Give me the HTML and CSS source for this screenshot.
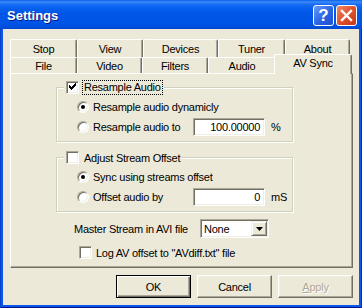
FILE: index.html
```html
<!DOCTYPE html>
<html lang="en">
<head>
  <meta charset="UTF-8" />
  <title>Settings</title>
  <link rel="stylesheet" href="styles.css">
</head>
<body>
  <div class="window">
    <div class="titlebar">
      <span class="title">Settings</span>
      <div class="caption-buttons">
        <span class="cap-btn help">?</span>
        <span class="cap-btn close">
          <svg width="19" height="19" viewBox="0 0 19 19">
            <path d="M5 5 L14 14 M14 5 L5 14" stroke="#fff" stroke-width="2.4" stroke-linecap="square" />
          </svg>
        </span>
      </div>
    </div>

    <div class="client">
      <!-- Tabs -->
      <div class="tab-row back">
        <div class="tab w-stop">Stop</div>
        <div class="tab w-view">View</div>
        <div class="tab w-devices">Devices</div>
        <div class="tab w-tuner">Tuner</div>
        <div class="tab w-about">About</div>
      </div>
      <div class="tab-row front">
        <div class="tab w-file">File</div>
        <div class="tab w-video">Video</div>
        <div class="tab w-filters">Filters</div>
        <div class="tab w-audio">Audio</div>
        <div class="tab active">AV Sync</div>
      </div>

      <div class="panel">
        <div class="group">
          <div class="group-head">
            <span class="checkbox checked"></span>
            <span class="focused">Resample Audio</span>
          </div>
          <div class="opt first">
            <span class="radio on"></span>
            <span>Resample audio dynamicly</span>
          </div>
          <div class="opt second">
            <span class="radio"></span>
            <span class="opt-label">Resample audio to</span>
            <span class="edit">100.00000</span>
            <span class="unit">%</span>
          </div>
        </div>

        <div class="group group-2">
          <div class="group-head">
            <span class="checkbox"></span>
            <span>Adjust Stream Offset</span>
          </div>
          <div class="opt first">
            <span class="radio on"></span>
            <span>Sync using streams offset</span>
          </div>
          <div class="opt second">
            <span class="radio"></span>
            <span class="opt-label">Offset audio by</span>
            <span class="edit">0</span>
            <span class="unit">mS</span>
          </div>
        </div>

        <div class="master-row">
          <span class="master-label">Master Stream in AVI file</span>
          <div class="combo">
            <span class="combo-text">None</span>
            <span class="combo-btn">
              <svg width="7" height="4" viewBox="0 0 7 4"><path d="M0 0 H7 L3.5 4 Z" fill="#000" /></svg>
            </span>
          </div>
        </div>

        <div class="log-row">
          <span class="checkbox"></span>
          <span>Log AV offset to "AVdiff.txt" file</span>
        </div>
      </div>

      <!-- Dialog buttons -->
      <div class="buttons">
        <button class="btn default">OK</button>
        <button class="btn">Cancel</button>
        <button class="btn disabled"><u>A</u>pply</button>
      </div>
    </div>
  </div>
</body>
</html>
```

FILE: styles.css
```css
body {
  margin: 0;
  font-family: "Liberation Sans", Arial, sans-serif;
  font-size: 11px;
  letter-spacing: -0.25px;
  color: #000;
}

.window {
  width: 362px;
  height: 308px;
  display: flex;
  flex-direction: column;
  background: #0b57ea;
  box-shadow: inset 1px 0 #0842c8, inset -1px 0 #0733a8, inset 0 -1px #00138c;
}

.titlebar {
  height: 29px;
  flex: none;
  display: flex;
  align-items: flex-start;
  padding: 0 5px 0 7px;
  background: linear-gradient(to bottom, #0a5fe8 0px, #3d8cfa 2px, #1a6ef5 4px, #0760ee 8px, #0055e5 14px, #0056e8 22px, #0051e0 26px, #0045d0 29px);
}

.title {
  flex: 1;
  margin-top: 8px;
  font-weight: bold;
  font-size: 13px;
  line-height: 15px;
  letter-spacing: 0;
  color: #fff;
  text-shadow: 1px 1px #0a1883;
}

.caption-buttons {
  display: flex;
  gap: 2px;
  margin-top: 5px;
}

.cap-btn {
  width: 21px;
  height: 21px;
  box-sizing: border-box;
  border: 1px solid #fff;
  border-radius: 3px;
  display: flex;
  align-items: center;
  justify-content: center;
  color: #fff;
}

.help {
  background: linear-gradient(135deg, #6a9cf8, #2a62e4 55%, #1b4fd0);
  font-weight: bold;
  font-size: 17px;
  letter-spacing: 0;
}

.close {
  background: linear-gradient(135deg, #f08a66, #e0502c 50%, #c2381a);
}

.client {
  flex: 1;
  margin: 0 3px 3px;
  background: #ece9d8;
  padding: 10px 6px 0 7px;
  display: flex;
  flex-direction: column;
}

/* Tabs */
.tab-row {
  display: flex;
}

.tab {
  box-sizing: border-box;
  height: 18px;
  border-top: 1px solid #fff;
  border-left: 1px solid #fff;
  border-right: 1px solid #716f64;
  border-radius: 2px 2px 0 0;
  box-shadow: inset -1px 0 #aca899;
  display: flex;
  align-items: center;
  justify-content: center;
  background: #ece9d8;
}

.front {
  height: 16px;
}

.front .tab {
  height: 16px;
}

.front .tab.active {
  width: 78px;
  height: 20px;
  margin: -3px 0 -1px -2px;
  padding-bottom: 3px;
  z-index: 1;
}

.w-stop { width: 67px; }
.w-view { width: 66px; }
.w-devices { width: 75px; }
.w-tuner { width: 67px; }
.w-about { width: 65px; }
.w-file { width: 67px; }
.w-video { width: 65px; }
.w-filters { width: 66px; }
.w-audio { width: 68px; }

.panel {
  height: 195px;
  box-sizing: border-box;
  border: 1px solid;
  border-color: #fff #716f64 #716f64 #fff;
  box-shadow: inset -1px -1px #aca899;
  padding: 13px 0 0 45px;
}

/* Group boxes */
.group {
  width: 237px;
  box-sizing: border-box;
  border: 1px solid #d0d0bf;
  box-shadow: 1px 1px 0 #fff, inset 1px 1px 0 #fff;
  padding-bottom: 5px;
}

.group-2 {
  margin-top: 15px;
}

.group-head {
  display: flex;
  align-items: center;
  gap: 5px;
  width: fit-content;
  height: 13px;
  margin: -7px 0 0 7px;
  padding: 0 2px;
  background: #ece9d8;
}

.focused {
  outline: 1px dotted #000;
  padding: 0 1px;
  margin-left: -1px;
  line-height: 13px;
}

.opt {
  display: flex;
  align-items: center;
  margin-left: 20px;
}

.opt.first {
  height: 16px;
  margin-top: 5px;
}

.opt.second {
  height: 18px;
  margin-top: 3px;
}

.opt .radio {
  margin-right: 4px;
}

.opt-label {
  width: 100px;
}

.unit {
  margin-left: 6px;
}

/* Controls */
.checkbox {
  width: 13px;
  height: 13px;
  flex: none;
  box-sizing: border-box;
  background: #fff;
  border: 1px solid;
  border-color: #aca899 #fff #fff #aca899;
  box-shadow: inset 1px 1px #716f64, inset -1px -1px #f1efe2;
}

.checkbox.checked {
  background: #fff linear-gradient(#000, #000) no-repeat;
  background:
    linear-gradient(#000, #000) 2px 3px / 1px 3px no-repeat,
    linear-gradient(#000, #000) 3px 4px / 1px 3px no-repeat,
    linear-gradient(#000, #000) 4px 5px / 1px 3px no-repeat,
    linear-gradient(#000, #000) 5px 4px / 1px 3px no-repeat,
    linear-gradient(#000, #000) 6px 3px / 1px 3px no-repeat,
    linear-gradient(#000, #000) 7px 2px / 1px 3px no-repeat,
    linear-gradient(#000, #000) 8px 1px / 1px 3px no-repeat,
    #fff;
}

.radio {
  width: 12px;
  height: 12px;
  flex: none;
  box-sizing: border-box;
  border-radius: 50%;
  background: #fff;
  border: 1px solid;
  border-color: #aca899 #fff #fff #aca899;
  box-shadow: inset 1px 1px #716f64, inset -1px -1px #f1efe2;
  display: flex;
  align-items: center;
  justify-content: center;
}

.radio.on::after {
  content: "";
  width: 4px;
  height: 4px;
  border-radius: 50%;
  background: #000;
}

.edit {
  width: 72px;
  height: 18px;
  box-sizing: border-box;
  background: #fff;
  border: 1px solid;
  border-color: #aca899 #fff #fff #aca899;
  box-shadow: inset 1px 1px #716f64, inset -1px -1px #f1efe2;
  display: flex;
  align-items: center;
  justify-content: flex-end;
  padding-right: 4px;
}

.master-row {
  display: flex;
  align-items: center;
  height: 19px;
  margin: 7px 0 0 18px;
}

.master-label {
  width: 126px;
}

.combo {
  width: 69px;
  height: 19px;
  box-sizing: border-box;
  background: #fff;
  border: 1px solid;
  border-color: #aca899 #fff #fff #aca899;
  box-shadow: inset 1px 1px #716f64, inset -1px -1px #f1efe2;
  display: flex;
  align-items: center;
  padding: 1px;
}

.combo-text {
  flex: 1;
  padding-left: 2px;
}

.combo-btn {
  width: 16px;
  height: 15px;
  box-sizing: border-box;
  background: #ece9d8;
  border: 1px solid;
  border-color: #f1efe2 #716f64 #716f64 #f1efe2;
  box-shadow: inset 1px 1px #fff, inset -1px -1px #aca899;
  display: flex;
  align-items: center;
  justify-content: center;
}

.log-row {
  display: flex;
  align-items: center;
  gap: 4px;
  height: 13px;
  margin: 8px 0 0 23px;
}

/* Dialog buttons */
.buttons {
  display: flex;
  justify-content: flex-end;
  gap: 6px;
  margin-top: 7px;
}

.btn {
  width: 75px;
  height: 23px;
  box-sizing: border-box;
  font: inherit;
  letter-spacing: inherit;
  color: #000;
  background: #ece9d8;
  border: 1px solid;
  border-color: #fff #716f64 #716f64 #fff;
  box-shadow: inset -1px -1px #aca899, inset 1px 1px #f1efe2;
  padding: 0;
}

.btn.default {
  border-color: #000;
  box-shadow: inset 1px 1px #fff, inset -1px -1px #716f64, inset -2px -2px #aca899;
}

.btn.disabled {
  color: #aca899;
  text-shadow: 1px 1px #fff;
}
```
